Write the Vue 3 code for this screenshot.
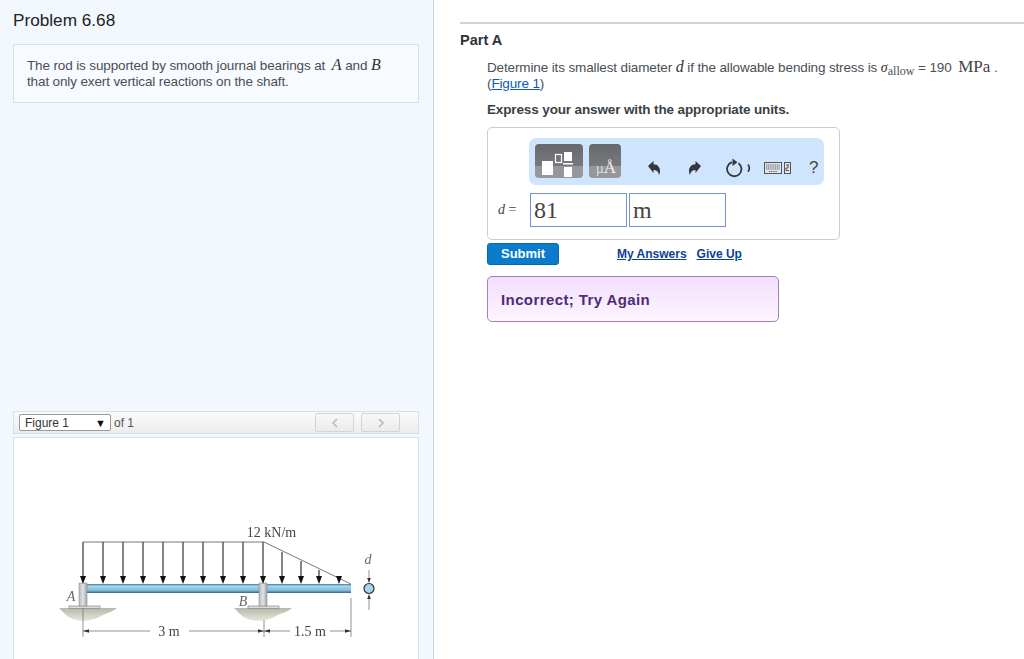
<script setup>
const topArrows = [83, 103, 123, 143, 163, 183, 203, 223, 243, 263]
const slantArrows = [
  { x: 282, y: 552 },
  { x: 301, y: 561 },
  { x: 319, y: 570 },
  { x: 339, y: 579 },
]
</script>

<template>
  <div class="page">
    <aside class="left">
      <h1 class="title">Problem 6.68</h1>
      <div class="intro">
        The rod is supported by smooth journal bearings at <i class="math amath">A</i> and <i class="math">B</i><br />
        that only exert vertical reactions on the shaft.
      </div>
      <div class="figbar">
        <div class="figselect"><span>Figure 1</span><span class="tri">▼</span></div>
        <span class="ofn">of 1</span>
        <div class="pager">
          <button class="pg"><svg width="8" height="10" viewBox="0 0 8 10"><path d="M6 1 2 5l4 4" fill="none" stroke="#b5b9bd" stroke-width="1.6" /></svg></button>
          <button class="pg"><svg width="8" height="10" viewBox="0 0 8 10"><path d="M2 1l4 4-4 4" fill="none" stroke="#b5b9bd" stroke-width="1.6" /></svg></button>
        </div>
      </div>
      <div class="figbox">
        <svg class="diagram" width="404" height="222" viewBox="14 438 404 222">
          <defs>
            <linearGradient id="beam" x1="0" y1="0" x2="0" y2="1">
              <stop offset="0" stop-color="#3f7597" />
              <stop offset="0.22" stop-color="#a9d6ec" />
              <stop offset="0.7" stop-color="#82bcdc" />
              <stop offset="1" stop-color="#2f6487" />
            </linearGradient>
            <linearGradient id="post" x1="0" y1="0" x2="1" y2="0">
              <stop offset="0" stop-color="#b4b7b9" />
              <stop offset="0.5" stop-color="#e2e3e4" />
              <stop offset="1" stop-color="#a2a5a7" />
            </linearGradient>
            <linearGradient id="ground" x1="0" y1="0" x2="0" y2="1">
              <stop offset="0" stop-color="#b9b9a8" />
              <stop offset="1" stop-color="#e6e6dc" />
            </linearGradient>
          </defs>
          <path d="M59 608H117C113 612 106 613 101 616 95 620 84 622 76 620 68 618 64 613 59 608Z" fill="url(#ground)" />
          <path d="M234 608H292C288 612 281 613 276 616 270 620 259 622 251 620 243 618 239 613 234 608Z" fill="url(#ground)" />
          <rect x="87" y="584" width="264" height="9" fill="url(#beam)" />
          <rect x="69" y="606" width="31" height="2.5" fill="#ddd" stroke="#777" stroke-width="0.6" />
          <rect x="248" y="606" width="31" height="2.5" fill="#ddd" stroke="#777" stroke-width="0.6" />
          <rect x="79" y="583" width="8" height="23" fill="url(#post)" stroke="#888" stroke-width="0.5" />
          <rect x="259" y="583" width="8" height="23" fill="url(#post)" stroke="#888" stroke-width="0.5" />
          <path d="M83 542H264L351 584" fill="none" stroke="#555" stroke-width="0.8" />
          <g v-for="x in topArrows" :key="x">
            <line :x1="x" y1="542" :x2="x" y2="578" stroke="#222" stroke-width="1.1" />
            <path :d="`M${x - 3} 576h6l-3 8z`" fill="#111" />
          </g>
          <g v-for="a in slantArrows" :key="a.x">
            <line :x1="a.x" :y1="a.y" :x2="a.x" y2="578" stroke="#222" stroke-width="1.1" />
            <path :d="`M${a.x - 3} 576h6l-3 8z`" fill="#111" />
          </g>
          <g stroke="#777" stroke-width="0.8" fill="none">
            <path d="M83 608V637M264 620V637M351 598V637" />
            <path d="M83 631H150M189 631H290M330 631H351" />
            <path d="M369 570V581M369 598V610" />
          </g>
          <g fill="#333">
            <path d="M83 631l6-1.8v3.6z" />
            <path d="M264 631l-6-1.8v3.6z" />
            <path d="M264 631l6-1.8v3.6z" />
            <path d="M351 631l-6-1.8v3.6z" />
            <path d="M369 583l-1.8-5h3.6z" />
            <path d="M369 594l-1.8 5h3.6z" />
          </g>
          <circle cx="369" cy="588.500" r="5" fill="#a9d4ea" stroke="#333" stroke-width="1.200" />
          <g class="fig-text">
            <text x="271.500" y="537" text-anchor="middle">12 kN/m</text>
            <text x="169" y="636" text-anchor="middle">3 m</text>
            <text x="310" y="636" text-anchor="middle">1.5 m</text>
            <text x="71" y="601" text-anchor="middle" font-style="italic">A</text>
            <text x="243" y="606" text-anchor="middle" font-style="italic">B</text>
            <text x="368" y="564" text-anchor="middle" font-style="italic">d</text>
          </g>
        </svg>
      </div>
    </aside>

    <main class="right">
      <hr class="rule" />
      <h2 class="part">Part A</h2>
      <div class="body">
        <p class="q">
          Determine its smallest diameter <i class="math">d</i> if the allowable bending stress is
          <i class="math sigma">σ</i><sub class="sub">allow</sub> = 190 <span class="unit">MPa</span> .<br />
          (<a class="figlink">Figure 1</a>)
        </p>
        <p class="hint">Express your answer with the appropriate units.</p>
        <div class="answer">
          <div class="toolbar">
            <div class="tbtn tbtn-a">
              <svg width="48" height="34" viewBox="0 0 48 34">
                <rect x="7" y="17" width="11" height="14" fill="#fff" />
                <rect x="20.500" y="10.500" width="6" height="8" fill="none" stroke="#fff" stroke-width="1.200" />
                <rect x="29" y="8" width="8" height="9" fill="#fff" />
                <rect x="28" y="19" width="10" height="1.500" fill="#fff" />
                <rect x="29" y="23" width="8" height="10" fill="#fff" />
              </svg>
            </div>
            <div class="tbtn tbtn-b"><span class="mu">µ<span class="ang">Å</span></span></div>
            <div class="tools">
              <svg class="ti" width="14" height="16" viewBox="0 0 14 16"><path d="M1 6 6.500 1v3.200C10.500 4.200 13 7 13 11c0 1.700-.5 3-1 4-.6-3.500-2.300-5-5.500-5v3z" fill="#33383f" /></svg>
              <svg class="ti t2" width="14" height="16" viewBox="0 0 14 16"><path d="M13 6 7.500 1v3.200C3.500 4.200 1 7 1 11c0 1.700.5 3 1 4 .6-3.500 2.300-5 5.500-5v3z" fill="#33383f" /></svg>
              <svg class="ti t3" width="28" height="20" viewBox="0 0 28 20">
                <path d="M6 4.200A7.200 7.200 0 1 0 12.500 5.200" fill="none" stroke="#33383f" stroke-width="1.800" />
                <path d="M6.500 .5v7.500l5-3.800z" fill="#33383f" />
                <path d="M22 6.500c1.600 2.200 1.600 5 0 7.200" fill="none" stroke="#33383f" stroke-width="1.700" />
              </svg>
              <svg class="ti t4" width="27" height="14" viewBox="0 0 27 14">
                <rect x="0.500" y="1.500" width="17" height="11" fill="#dfe6ee" stroke="#555" />
                <path d="M2 4h14M2 6h14M2 8h14M5 10.500h8" stroke="#666" stroke-width="1.100" stroke-dasharray="1.200 .6" />
                <rect x="20.500" y="1.500" width="6" height="11" fill="#dfe6ee" stroke="#555" />
                <path d="M22 4h3M24 4v3h-2v2.500h3" fill="none" stroke="#555" />
              </svg>
              <span class="help">?</span>
            </div>
          </div>
          <div class="inputs">
            <span class="label"><i>d</i> =</span>
            <div class="field">81</div>
            <div class="field field2">m</div>
          </div>
        </div>
        <div class="actions">
          <button class="submit">Submit</button>
          <a class="act first">My Answers</a>
          <a class="act">Give Up</a>
        </div>
        <div class="feedback">Incorrect; Try Again</div>
      </div>
    </main>
  </div>
</template>

<style>
html, body { margin: 0; background: #fff; }
</style>

<style scoped>
.page {
  display: flex;
  width: 1024px;
  height: 659px;
  overflow: hidden;
  font-family: "Liberation Sans", Arial, sans-serif;
  color: #4a4f55;
}
.left {
  box-sizing: border-box;
  width: 434px;
  height: 659px;
  flex: none;
  padding: 0 14px 0 13px;
  background: #f3f8fe;
  border-right: 1px solid #c9d6e4;
}
.title {
  margin: 11px 0 0 0;
  font-size: 17.2px;
  line-height: 19px;
  font-weight: 400;
  color: #222;
}
.intro {
  box-sizing: border-box;
  height: 59px;
  margin-top: 14px;
  padding: 13px 13px 0;
  border: 1px solid #d5e1ee;
  background: #f7fafe;
  font-size: 13.5px;
  letter-spacing: -0.13px;
  line-height: 16px;
}
.math {
  font-family: "Liberation Serif", "Times New Roman", serif;
  font-size: 16px;
  line-height: 0;
  letter-spacing: 0;
  color: #333;
}
.amath { margin-left: 3px; }
.figbar {
  box-sizing: border-box;
  display: flex;
  align-items: center;
  height: 23px;
  margin-top: 308px;
  padding: 0 5px;
  border: 1px solid #d5dfea;
  background: linear-gradient(#fbfbfb, #ececec);
  font-size: 12px;
}
.figselect {
  box-sizing: border-box;
  display: flex;
  justify-content: space-between;
  align-items: center;
  width: 92px;
  height: 17px;
  padding: 0 4px 0 5px;
  background: #fff;
  border: 1px solid #999;
  border-radius: 2px;
  color: #333;
}
.tri { font-size: 11px; line-height: 12px; color: #111; }
.ofn { margin-left: 3px; color: #555; }
.pager {
  display: flex;
  gap: 7px;
  margin-left: auto;
  margin-right: 13px;
}
.pg {
  display: flex;
  align-items: center;
  justify-content: center;
  box-sizing: border-box;
  width: 39px;
  height: 19px;
  padding: 0;
  background: linear-gradient(#f8f8f8, #ebebeb);
  border: 1px solid #d4d4d4;
  border-radius: 2px;
}
.figbox {
  box-sizing: border-box;
  height: 222px;
  margin-top: 3px;
  background: #fff;
  border: 1px solid #d5e1ee;
  border-bottom: 0;
  overflow: hidden;
}
.diagram {
  display: block;
  filter: blur(0.45px);
}
.fig-text text {
  font-family: "Liberation Serif", "Times New Roman", serif;
  font-size: 14px;
  fill: #444;
}
.fig-text text[font-style] { fill: #666; }

.right {
  flex: 1;
  min-width: 0;
  padding-left: 26px;
}
.rule {
  height: 2px;
  margin: 22px 0 0;
  border: 0;
  background: #d2d2d2;
}
.part {
  margin: 8px 0 0;
  font-size: 14.5px;
  line-height: 16px;
  font-weight: 700;
  color: #2f3338;
}
.body {
  width: 537px;
  margin-left: 27px;
}
.q {
  margin: 12px 0 0;
  font-size: 13.5px;
  letter-spacing: -0.13px;
  line-height: 15.5px;
  white-space: nowrap;
}
.sigma { font-size: 14px; }
.sub {
  font-family: "Liberation Serif", "Times New Roman", serif;
  font-size: 12px;
  letter-spacing: 0;
  line-height: 0;
  vertical-align: -3px;
}
.unit {
  margin-left: 3px;
  font-family: "Liberation Serif", "Times New Roman", serif;
  font-size: 17px;
  letter-spacing: 0;
  line-height: 0;
  color: #444;
}
.figlink { color: #0b5bb5; text-decoration: underline; }
.hint {
  margin: 11px 0 0;
  font-size: 13.5px;
  letter-spacing: -0.13px;
  line-height: 16px;
  font-weight: 700;
  color: #3a3f45;
}
.answer {
  box-sizing: border-box;
  width: 353px;
  height: 113px;
  margin-top: 9px;
  padding: 10px 15px 0 41px;
  border: 1px solid #ccc;
  border-radius: 5px;
  background: #fff;
}
.toolbar {
  box-sizing: border-box;
  display: flex;
  align-items: flex-start;
  height: 47px;
  padding: 6px 0 0 6px;
  background: #cfe5fd;
  border-radius: 7px;
}
.tbtn {
  flex: none;
  height: 34px;
  border-radius: 4px;
  overflow: hidden;
  background: linear-gradient(#67686b 0, #78797c 64%, #96979b 64%, #96979b 100%);
}
.tbtn-a { width: 48px; }
.tbtn-a svg { display: block; }
.tbtn-b {
  position: relative;
  width: 32px;
  margin-left: 6px;
}
.mu {
  position: absolute;
  right: 5px;
  bottom: 0;
  font-family: "Liberation Serif", "Times New Roman", serif;
  font-size: 14px;
  line-height: 19px;
  color: #dcdcdc;
}
.ang { font-size: 17px; color: #f2f2f2; }
.tools {
  display: flex;
  align-items: center;
  height: 48px;
  margin-left: 26px;
}
.ti { display: block; flex: none; }
.t2 { margin-left: 27px; }
.t3 { margin-left: 24px; }
.t4 { margin-left: 10px; }
.help {
  margin-left: 18px;
  font-size: 17px;
  color: #444;
}
.inputs {
  display: flex;
  align-items: center;
  height: 34px;
  margin: 8px 0 0 -31px;
}
.label {
  width: 32px;
  font-family: "Liberation Serif", "Times New Roman", serif;
  font-size: 14px;
  color: #444;
}
.field {
  box-sizing: border-box;
  width: 97px;
  height: 34px;
  padding: 0 3px;
  border: 1px solid #6f93d6;
  font-family: "Liberation Serif", "Times New Roman", serif;
  font-size: 24px;
  line-height: 33px;
  color: #444;
  background: #fff;
}
.field2 { margin-left: 2px; }
.actions {
  display: flex;
  align-items: center;
  height: 22px;
  margin-top: 3px;
}
.submit {
  width: 72px;
  height: 22px;
  padding: 0 0 1px;
  border: 1px solid #0a68ad;
  border-radius: 3px;
  background: #0b7ccb;
  color: #fff;
  font-family: "Liberation Sans", Arial, sans-serif;
  font-size: 13px;
  font-weight: 700;
}
.act {
  margin-left: 10px;
  font-size: 12px;
  font-weight: 700;
  color: #0c3f96;
  text-decoration: underline;
}
.act.first { margin-left: 58px; }
.feedback {
  box-sizing: border-box;
  width: 292px;
  height: 46px;
  margin-top: 11px;
  padding-left: 13px;
  border: 1px solid #a77db8;
  border-radius: 5px;
  background: linear-gradient(#f1defc, #fdf5ff);
  font-size: 15px;
  letter-spacing: 0.4px;
  font-weight: 700;
  line-height: 45px;
  color: #4f2b78;
}
</style>
